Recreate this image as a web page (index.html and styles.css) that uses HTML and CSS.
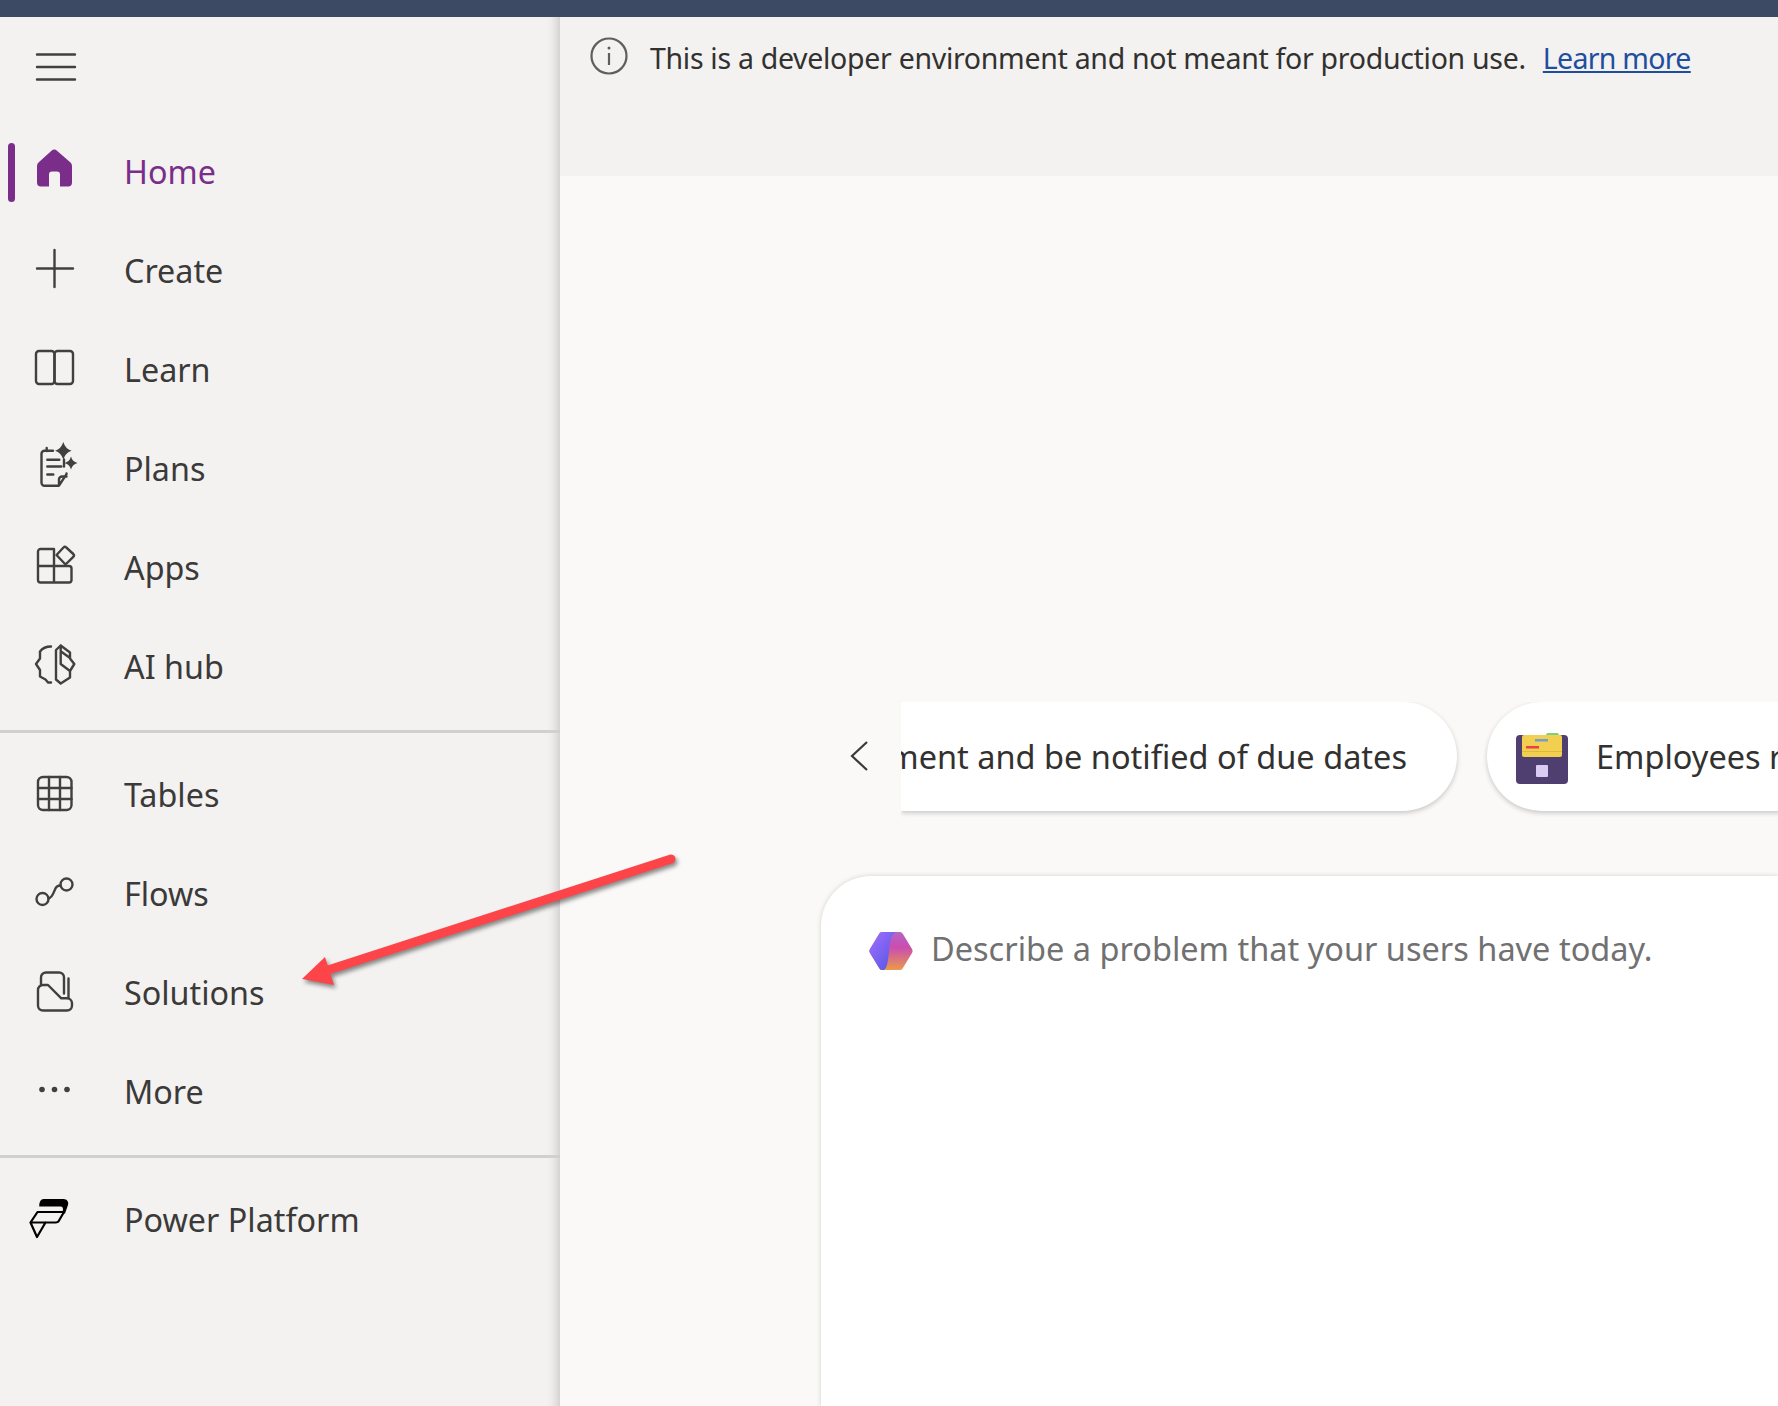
FILE: index.html
```html
<!DOCTYPE html>
<html lang="en">
<head>
    <meta charset="UTF-8">
    <meta name="viewport" content="width=device-width, initial-scale=1.0">
    <title>Power Apps | Home</title>
    <link rel="stylesheet" href="styles.css">
</head>
<body>
    <div class="topbar"></div>
    <div class="app">
        <nav class="sidebar">
            <button class="menu-btn" aria-label="Toggle navigation">
                <svg class="icon" viewBox="0 0 44 44"><path d="M4 9.500h38M4 22h38M4 34.500h38"/></svg>
            </button>
            <ul class="nav-group">
                <li class="nav-item active">
                    <svg class="icon" viewBox="0 0 44 44"><path class="solid" d="M18.500 1.200a4 4 0 0 1 5.500 0L37.500 13a5 5 0 0 1 1.500 3.500V33a4 4 0 0 1-4 4h-8V25a3 3 0 0 0-3-3h-5a3 3 0 0 0-3 3v12H8a4 4 0 0 1-4-4V16.500A5 5 0 0 1 5.500 13z"/></svg>
                    <span>Home</span>
                </li>
                <li class="nav-item">
                    <svg class="icon" viewBox="0 0 44 44"><path d="M4 20h36M21.500 1.500v37"/></svg>
                    <span>Create</span>
                </li>
                <li class="nav-item">
                    <svg class="icon" viewBox="0 0 44 44"><rect x="3" y="3.500" width="18.500" height="33" rx="3"/><rect x="21.500" y="3.500" width="18.500" height="33" rx="3"/></svg>
                    <span>Learn</span>
                </li>
                <li class="nav-item">
                    <svg class="icon" viewBox="0 0 44 44">
                        <path d="M20 4.200H11.500a3 3 0 0 0-3 3v29a3 3 0 0 0 3 3H26l7.500-11.500V27M31 13v7M13.700 1.500v3M26 39V33a3 3 0 0 1 3-3h4.500M14.300 13.200h12M14.300 20h14M14.300 28h6"/>
                        <path class="solid" d="M30.300-4.600Q32.300 2.200 38.600 4.200Q32.300 6.200 30.300 13Q28.300 6.200 22 4.200Q28.300 2.200 30.300-4.600zM38 10Q39.300 15.200 44.500 16.500Q39.300 17.800 38 23Q36.700 17.800 31.500 16.500Q36.700 15.200 38 10z"/>
                    </svg>
                    <span>Plans</span>
                </li>
                <li class="nav-item">
                    <svg class="icon" viewBox="0 0 44 44"><path d="M21 20.500H5V6a2.500 2.500 0 0 1 2.500-2.500H21zM21 20.500V37H7.500A2.500 2.500 0 0 1 5 34.500V20.500M21 20.500H36a2.500 2.500 0 0 1 2.500 2.500V34.500A2.500 2.500 0 0 1 36 37H21"/><path d="M23.500 9.500L30.500 2a2 2 0 0 1 2.800 0l7 6.500a2 2 0 0 1 0 2.800L32.500 19z"/></svg>
                    <span>Apps</span>
                </li>
                <li class="nav-item">
                    <svg class="icon" viewBox="0 0 44 44">
                        <path d="M18 2c-5 0-8 1-11 5v7l-4 5.500 4 6v6.500l5.500 3 2.500 3h3"/>
                        <path d="M23 5.500L27.700 1L37 8v6l4.300 5.500L37 26.500V33L27.700 39L23 35zM27.700 1v18.500l9.300 7M27.700 6.800l9 6.500"/>
                    </svg>
                    <span>AI hub</span>
                </li>
            </ul>
            <hr class="nav-divider">
            <ul class="nav-group">
                <li class="nav-item">
                    <svg class="icon" viewBox="0 0 44 44"><rect x="5" y="4.500" width="33.500" height="33" rx="5"/><path d="M16 4.500v33M27 4.500v33M5 15.500h33.500M5 26.500h33.500"/></svg>
                    <span>Tables</span>
                </li>
                <li class="nav-item">
                    <svg class="icon" viewBox="0 0 44 44"><circle cx="9.500" cy="27.500" r="6"/><circle cx="33.500" cy="13" r="6"/><path d="M15.500 27C19.500 26 20 22 22 18C23 15 24.500 14 27.500 14"/></svg>
                    <span>Flows</span>
                </li>
                <li class="nav-item">
                    <svg class="icon" viewBox="0 0 44 44"><path d="M5 19.500a5 5 0 0 1 5-5h5l13.300 13.300H34a5 5 0 0 1 5 5v2.200a5 5 0 0 1-5 5H10a5 5 0 0 1-5-5z"/><path d="M8 14.500V7a5 5 0 0 1 5-5h13a5 5 0 0 1 5 5v16M35.500 8v19"/></svg>
                    <span>Solutions</span>
                </li>
                <li class="nav-item">
                    <svg class="icon" viewBox="0 0 44 44"><circle class="solid" cx="9" cy="20" r="2.800"/><circle class="solid" cx="21.500" cy="20" r="2.800"/><circle class="solid" cx="34" cy="20" r="2.800"/></svg>
                    <span>More</span>
                </li>
            </ul>
            <hr class="nav-divider">
            <ul class="nav-group">
                <li class="nav-item">
                    <svg class="icon platform" viewBox="0 0 44 44">
                        <path class="solid" d="M10.500 1.500H30.500c3.500 0 5.500 3 4.500 6L32 16H29.500L30 11.500C30 9.500 28.500 9 27 9H6.300C6 4.500 8 1.500 10.500 1.500z"/>
                        <path d="M4.500 14.500H31L26 23C25.500 24.500 24 25 22.500 25H-2.500zM-2.500 25L4 39.500L12.500 25"/>
                    </svg>
                    <span>Power Platform</span>
                </li>
            </ul>
        </nav>
        <main class="main">
            <div class="banner">
                <svg class="info-icon" viewBox="0 0 38 38"><circle cx="19" cy="19" r="17.500"/><path d="M19 16v12"/><circle class="dot" cx="19" cy="11" r="1.500"/></svg>
                <p>This is a developer environment and not meant for production use.</p>
                <a href="#">Learn more</a>
            </div>
            <div class="content">
                <div class="carousel">
                    <button class="prev-btn" aria-label="Previous">
                        <svg viewBox="0 0 20 32"><path d="M18 2L3 16l15 14"/></svg>
                    </button>
                    <div class="pill-track">
                        <div class="pill pill-clipped"><span>Track an assignment and be notified of due dates</span></div>
                        <div class="pill">
                            <svg class="pill-icon" viewBox="0 0 52 52">
                                <rect x="30" y="0" width="13" height="6" rx="2" fill="#7ccf7c"/>
                                <rect x="0" y="2" width="52" height="49" rx="4" fill="#4f3f70"/>
                                <rect x="6" y="2" width="40" height="22" rx="2" fill="#f3cf4f"/>
                                <rect x="19" y="6" width="13" height="2.500" fill="#6fa0d0"/>
                                <rect x="10" y="13" width="13" height="2.500" fill="#e8404f"/>
                                <rect x="6" y="18" width="40" height="1" fill="#e0b83c"/>
                                <rect x="20" y="32" width="12" height="12" rx="1" fill="#d8ccf2"/>
                            </svg>
                            <span>Employees request time off and track approvals</span>
                        </div>
                    </div>
                </div>
                <div class="prompt-card">
                    <svg class="copilot" viewBox="0 0 44 40">
                        <defs>
                            <linearGradient id="hexLeft" x1="0" y1="0" x2="1" y2="1">
                                <stop offset="0" stop-color="#a46ffb"/>
                                <stop offset="1" stop-color="#4f55e6"/>
                            </linearGradient>
                            <linearGradient id="hexRight" x1="0" y1="0" x2="0" y2="1">
                                <stop offset="0" stop-color="#b765c4"/>
                                <stop offset=".4" stop-color="#c94db0"/>
                                <stop offset="1" stop-color="#ea9a4c"/>
                            </linearGradient>
                        </defs>
                        <path fill="url(#hexRight)" d="M13 1h18a3 3 0 0 1 2.600 1.500L43 18a4 4 0 0 1 0 4l-9.400 15.500A3 3 0 0 1 31 39H13a3 3 0 0 1-2.600-1.500L1 22a4 4 0 0 1 0-4l9.400-15.500A3 3 0 0 1 13 1z"/>
                        <path fill="url(#hexLeft)" d="M13 1H27C22 4 21 10 20 20C19 30 18.500 36 15 39H13a3 3 0 0 1-2.600-1.500L1 22a4 4 0 0 1 0-4l9.400-15.500A3 3 0 0 1 13 1z"/>
                    </svg>
                    <span class="placeholder">Describe a problem that your users have today.</span>
                </div>
            </div>
        </main>
    </div>
    <svg class="annotation" viewBox="0 0 1778 1406">
        <path class="arrow-shaft" d="M671 859L325 971"/>
        <path class="arrow-head" d="M302 979L325 957L334 985z"/>
    </svg>
</body>
</html>
```

FILE: styles.css
```css
* {
    margin: 0;
    padding: 0;
    box-sizing: border-box;
}
html, body {
    height: 100%;
    overflow: hidden;
}
body {
    display: flex;
    flex-direction: column;
    position: relative;
    font-family: "Noto Sans", "Open Sans", sans-serif;
    color: #3b3a39;
    background: #faf9f8;
}
.topbar {
    height: 17px;
    flex: none;
    background: #3c4b63;
}
.app {
    flex: 1;
    display: flex;
    min-height: 0;
}

/* left navigation */
.sidebar {
    width: 560px;
    flex: none;
    background: #f3f2f1;
    box-shadow: inset -14px 0 12px -12px rgba(0, 0, 0, 0.2);
}
.menu-btn {
    display: flex;
    align-items: center;
    width: 100%;
    height: 100px;
    margin-bottom: 5px;
    padding-left: 33px;
    border: none;
    background: none;
}
.icon {
    width: 44px;
    height: 44px;
    flex: none;
    overflow: visible;
    fill: none;
    stroke: #404040;
    stroke-width: 2.4;
    stroke-linejoin: round;
    stroke-linecap: round;
}
.icon .solid {
    fill: #404040;
    stroke: none;
}
.nav-group {
    list-style: none;
}
.nav-item {
    position: relative;
    display: flex;
    align-items: center;
    gap: 47px;
    height: 99px;
    padding-left: 33px;
    padding-bottom: 2px;
    font-size: 32.3px;
}
.nav-item .icon {
    transform: translateY(0.5px);
}
.nav-item.active {
    color: #7a2e8a;
}
.nav-item.active .solid {
    fill: #7a2e8a;
}
.nav-item.active::before {
    content: "";
    position: absolute;
    left: 8px;
    top: 21px;
    width: 7px;
    height: 59px;
    border-radius: 4px;
    background: #7a2e8a;
}
.platform {
    stroke: #000;
    stroke-width: 2.2;
}
.icon.platform .solid {
    fill: #000;
}
.nav-divider {
    height: 3px;
    margin: 14px 0 12px;
    border: none;
    background: #d2d0ce;
}

/* main area */
.main {
    flex: 1;
    min-width: 0;
    display: flex;
    flex-direction: column;
}
.banner {
    height: 159px;
    flex: none;
    display: flex;
    align-items: flex-start;
    padding: 19px 0 0 30px;
    background: #f3f2f1;
    font-size: 28.5px;
    letter-spacing: -0.3px;
    line-height: 44px;
    color: #323130;
}
.info-icon {
    width: 38px;
    height: 38px;
    flex: none;
    margin: 1px 22px 0 0;
    fill: none;
    stroke: #605e5c;
    stroke-width: 2.2;
}
.info-icon .dot {
    fill: #605e5c;
    stroke: none;
}
.banner a {
    margin-left: 17px;
    letter-spacing: -0.7px;
    color: #1f4e9e;
}
.content {
    flex: 1;
    min-height: 0;
    padding-top: 526px;
}
.carousel {
    display: flex;
    height: 125px;
}
.prev-btn {
    width: 341px;
    flex: none;
    display: flex;
    padding: 38px 0 0 289px;
    border: none;
    background: none;
}
.prev-btn svg {
    width: 20px;
    height: 32px;
    fill: none;
    stroke: #3b3a39;
    stroke-width: 2.2;
}
.pill-track {
    flex: 1;
    min-width: 0;
    display: flex;
    gap: 30px;
    overflow: hidden;
    padding-bottom: 16px;
}
.pill {
    flex: none;
    height: 109px;
    display: flex;
    align-items: center;
    gap: 28px;
    padding-left: 29px;
    padding-right: 50px;
    border-radius: 55px;
    background: #fff;
    box-shadow: 0 2px 5px rgba(0, 0, 0, 0.2);
    font-size: 32.5px;
    color: #323130;
    white-space: nowrap;
}
.pill-clipped {
    width: 556px;
    justify-content: flex-end;
    overflow: hidden;
    border-radius: 0 55px 55px 0;
}
.pill-clipped span {
    flex: none;
}
.pill-icon {
    width: 52px;
    height: 52px;
    flex: none;
    margin-top: 4px;
}
.prompt-card {
    height: 531px;
    margin: 49px 0 0 261px;
    display: flex;
    align-items: flex-start;
    gap: 18px;
    padding: 55px 0 0 48px;
    border-radius: 50px 0 0 0;
    background: #fff;
    box-shadow: 0 0 5px rgba(0, 0, 0, 0.16);
}
.copilot {
    width: 44px;
    height: 40px;
    flex: none;
}
.placeholder {
    margin-top: -2px;
    font-size: 32.5px;
    line-height: 40px;
    color: #717171;
}

/* red arrow drawn over the screenshot */
.annotation {
    position: absolute;
    left: 0;
    top: 0;
    width: 1778px;
    height: 1406px;
    pointer-events: none;
    filter: drop-shadow(2px 3px 2px rgba(0, 0, 0, 0.45));
}
.arrow-shaft {
    fill: none;
    stroke: #fd4448;
    stroke-width: 9;
    stroke-linecap: round;
}
.arrow-head {
    fill: #fd4448;
}
```
